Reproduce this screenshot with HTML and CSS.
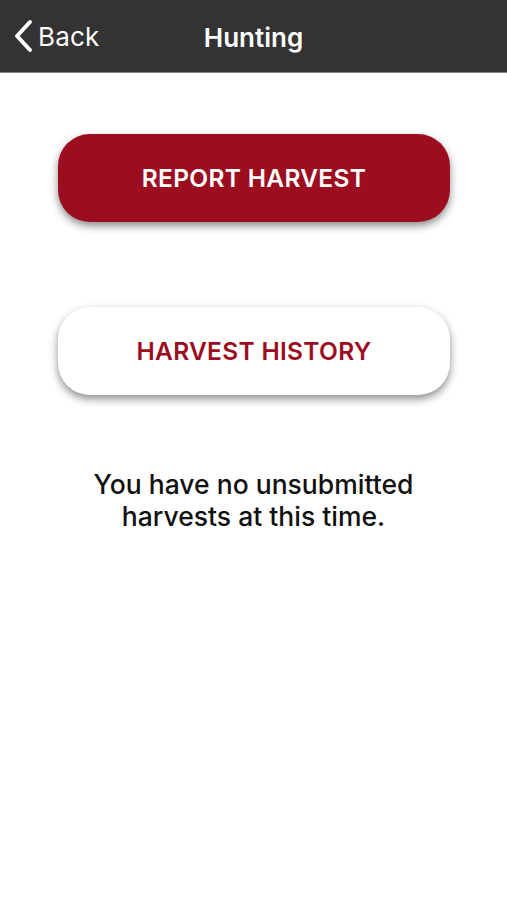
FILE: index.html
```html
<!DOCTYPE html>
<html>
<head>
<meta charset="utf-8">
<link rel="stylesheet" href="styles.css">
</head>
<body>
<header class="navbar">
  <div class="back">
    <svg class="chev" width="22" height="34" viewBox="0 0 22 34"><path d="M18 3 L5 17 L18 31" fill="none" stroke="#fff" stroke-width="4" stroke-linecap="round" stroke-linejoin="round"/></svg>
    <span class="back-label">Back</span>
  </div>
  <div class="title">Hunting</div>
</header>
<main class="content">
  <button class="btn btn-primary">REPORT HARVEST</button>
  <button class="btn btn-secondary">HARVEST HISTORY</button>
  <p class="message">You have no unsubmitted<br>harvests at this time.</p>
</main>
</body>
</html>
```
FILE: styles.css
```css
html, body {
  margin: 0;
  padding: 0;
  background: #fff;
  font-family: Inter, "Noto Sans", "Liberation Sans", sans-serif;
}
.navbar {
  position: relative;
  height: 72px;
  background: #333333;
  border-bottom: 1px solid #8a8a8a;
  display: flex;
  align-items: center;
  justify-content: center;
}
.back {
  position: absolute;
  left: 12px;
  top: 19px;
  display: flex;
  align-items: center;
  gap: 4px;
}
.chev { display: block; }
.back-label {
  color: #fff;
  font-size: 26px;
  font-weight: 400;
  letter-spacing: 0.2px;
}
.title {
  color: #fff;
  font-size: 26px;
  font-weight: 600;
  margin-top: 2px;
}
.content {
  display: flex;
  flex-direction: column;
  align-items: center;
  padding-top: 61px;
}
.btn {
  width: 392px;
  height: 88px;
  border-radius: 32px;
  border: none;
  font-family: inherit;
  font-size: 24.5px;
  font-weight: 600;
  letter-spacing: 0.3px;
  box-shadow: 0 4px 8px rgba(0,0,0,0.45);
  margin-left: 1px;
}
.btn-primary {
  background: #9c0d1f;
  color: #fff;
}
.btn-secondary {
  margin-top: 85px;
  background: #fff;
  color: #9c0d1f;
}
.message {
  margin: 73px 0 0;
  text-align: center;
  font-size: 26.5px;
  font-weight: 500;
  line-height: 32px;
  color: #111;
}
```
